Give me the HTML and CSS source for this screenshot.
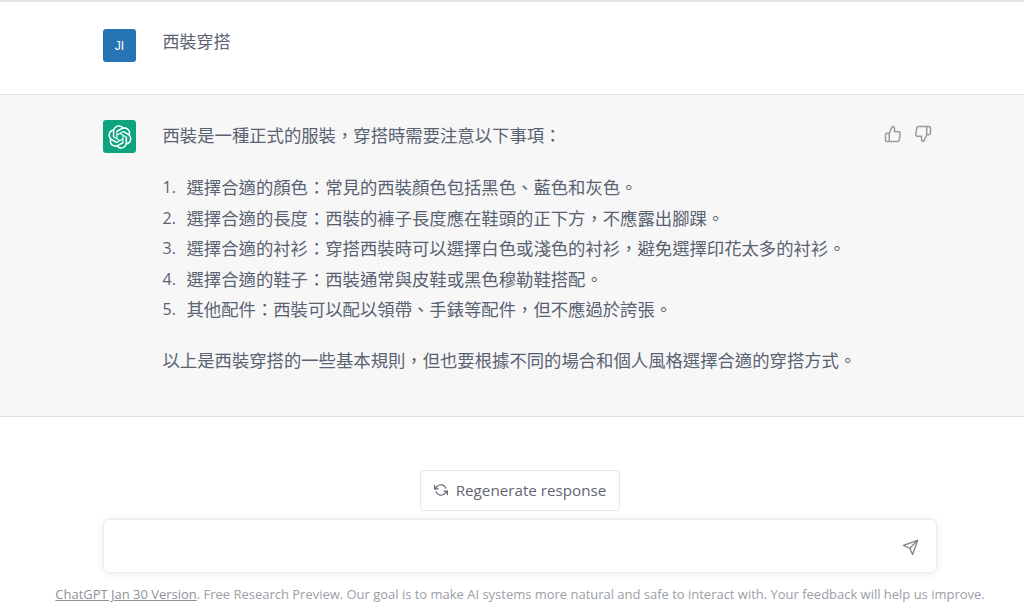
FILE: index.html
```html
<!DOCTYPE html>
<html lang="zh-TW">
<head>
<meta charset="utf-8">
<title>ChatGPT</title>
<link rel="stylesheet" href="styles.css">
</head>
<body>
<main class="page">
  <section class="row row-user">
    <div class="avatar avatar-user">JI</div>
    <p class="prompt">西裝穿搭</p>
  </section>
  <section class="row row-bot">
    <div class="avatar avatar-bot">
      <svg class="logo" viewBox="0 0 41 41" fill="currentColor"><path d="M37.5324 16.8707C37.9808 15.5241 38.1363 14.0974 37.9886 12.6859C37.8409 11.2744 37.3934 9.91076 36.676 8.68622C35.6126 6.83404 33.9882 5.3676 32.0373 4.4985C30.0864 3.62941 27.9098 3.40259 25.8215 3.85078C24.8796 2.7893 23.7219 1.94125 22.4257 1.36341C21.1295 0.785575 19.7249 0.491269 18.3058 0.500197C16.1708 0.495044 14.0893 1.16803 12.3614 2.42214C10.6335 3.67624 9.34853 5.44666 8.6917 7.47815C7.30085 7.76286 5.98686 8.3414 4.8377 9.17505C3.68854 10.0087 2.73073 11.0782 2.02839 12.312C0.956464 14.1591 0.498905 16.2988 0.721698 18.4228C0.944492 20.5467 1.83612 22.5449 3.268 24.1293C2.81966 25.4759 2.66413 26.9026 2.81182 28.3141C2.95951 29.7256 3.40701 31.0892 4.12437 32.3138C5.18791 34.1659 6.8123 35.6322 8.76321 36.5013C10.7141 37.3704 12.8907 37.5973 14.9789 37.1492C15.9208 38.2107 17.0786 39.0587 18.3747 39.6366C19.6709 40.2144 21.0755 40.5087 22.4946 40.4998C24.6307 40.5054 26.7133 39.8321 28.4418 38.5772C30.1704 37.3223 31.4556 35.5506 32.1119 33.5179C33.5027 33.2332 34.8167 32.6547 35.9659 31.821C37.115 30.9874 38.0728 29.9178 38.7752 28.684C39.8458 26.8371 40.3023 24.6979 40.0789 22.5748C39.8556 20.4517 38.9639 18.4544 37.5324 16.8707ZM22.4978 37.8849C20.7443 37.8874 19.0459 37.2733 17.6994 36.1501C17.7601 36.117 17.8666 36.0586 17.936 36.0161L25.9004 31.4156C26.1003 31.3019 26.2663 31.137 26.3813 30.9378C26.4964 30.7386 26.5563 30.5124 26.5549 30.2825V19.0542L29.9213 20.998C29.9389 21.0068 29.9541 21.0198 29.9656 21.0359C29.977 21.052 29.9842 21.0707 29.9867 21.0902V30.3889C29.9842 32.375 29.1946 34.2791 27.7909 35.6841C26.3872 37.0892 24.4838 37.8806 22.4978 37.8849ZM6.39227 31.0064C5.51397 29.4888 5.19742 27.7107 5.49804 25.9832C5.55718 26.0187 5.66048 26.0818 5.73461 26.1244L13.699 30.7248C13.8975 30.8408 14.1233 30.902 14.3532 30.902C14.583 30.902 14.8088 30.8408 15.0073 30.7248L24.731 25.1103V28.9979C24.7321 29.0177 24.7283 29.0376 24.7199 29.0556C24.7115 29.0736 24.6988 29.0893 24.6829 29.1012L16.6317 33.7497C14.9096 34.7416 12.8643 35.0097 10.9447 34.4954C9.02506 33.9811 7.38785 32.7263 6.39227 31.0064ZM4.29707 13.6194C5.17156 12.0998 6.55279 10.9364 8.19885 10.3327C8.19885 10.4013 8.19491 10.5228 8.19491 10.6071V19.808C8.19351 20.0378 8.25334 20.2638 8.36823 20.4629C8.48312 20.6619 8.64893 20.8267 8.84863 20.9404L18.5723 26.5542L15.206 28.4979C15.1894 28.5089 15.1703 28.5155 15.1505 28.5173C15.1307 28.5191 15.1107 28.516 15.0924 28.5082L7.04046 23.8557C5.32135 22.8601 4.06716 21.2235 3.55289 19.3046C3.03862 17.3858 3.30624 15.3413 4.29707 13.6194ZM31.955 20.0556L22.2312 14.4411L25.5976 12.4981C25.6142 12.4872 25.6333 12.4805 25.6531 12.4787C25.6729 12.4769 25.6928 12.4801 25.7111 12.4879L33.7631 17.1364C34.9967 17.849 36.0017 18.8982 36.6606 20.1613C37.3194 21.4244 37.6047 22.849 37.4832 24.2684C37.3617 25.6878 36.8382 27.0432 35.9743 28.1759C35.1103 29.3086 33.9415 30.1717 32.6047 30.6641C32.6047 30.5947 32.6047 30.4733 32.6047 30.3889V21.188C32.6066 20.9586 32.5474 20.7328 32.4332 20.5338C32.319 20.3348 32.154 20.1698 31.955 20.0556ZM35.3055 15.0128C35.2464 14.9765 35.1431 14.9142 35.069 14.8717L27.1045 10.2712C26.906 10.1554 26.6803 10.0943 26.4504 10.0943C26.2206 10.0943 25.9948 10.1554 25.7963 10.2712L16.0726 15.8858V11.9982C16.0715 11.9783 16.0753 11.9585 16.0837 11.9405C16.0921 11.9225 16.1048 11.9068 16.1207 11.8949L24.1719 7.25025C25.4053 6.53903 26.8158 6.19376 28.2383 6.25482C29.6608 6.31589 31.0364 6.78077 32.2044 7.59508C33.3723 8.40939 34.2842 9.53945 34.8334 10.8531C35.3826 12.1667 35.5464 13.6095 35.3055 15.0128ZM14.2424 21.9419L10.8752 19.9981C10.8576 19.9893 10.8423 19.9763 10.8309 19.9602C10.8195 19.9441 10.8122 19.9254 10.8098 19.9058V10.6071C10.8107 9.18295 11.2173 7.78848 11.9819 6.58696C12.7466 5.38544 13.8377 4.42659 15.1275 3.82264C16.4173 3.21869 17.8524 2.99464 19.2649 3.1767C20.6775 3.35876 22.0089 3.93941 23.1034 4.85067C23.0427 4.88379 22.937 4.94215 22.8668 4.98473L14.9024 9.58517C14.7025 9.69878 14.5366 9.86356 14.4215 10.0626C14.3065 10.2616 14.2466 10.4877 14.2479 10.7175L14.2424 21.9419ZM16.071 17.9991L20.4018 15.4978L24.7325 17.9975V22.9985L20.4018 25.4983L16.071 22.9985V17.9991Z"/></svg>
    </div>
    <div class="answer">
      <p class="para">西裝是一種正式的服裝，穿搭時需要注意以下事項：</p>
      <ol class="steps">
        <li>選擇合適的顏色：常見的西裝顏色包括黑色、藍色和灰色。</li>
        <li>選擇合適的長度：西裝的褲子長度應在鞋頭的正下方，不應露出腳踝。</li>
        <li>選擇合適的衬衫：穿搭西裝時可以選擇白色或淺色的衬衫，避免選擇印花太多的衬衫。</li>
        <li>選擇合適的鞋子：西裝通常與皮鞋或黑色穆勒鞋搭配。</li>
        <li>其他配件：西裝可以配以領帶、手錶等配件，但不應過於誇張。</li>
      </ol>
      <p class="para">以上是西裝穿搭的一些基本規則，但也要根據不同的場合和個人風格選擇合適的穿搭方式。</p>
    </div>
    <div class="feedback">
      <svg class="icon thumb" viewBox="0 0 24 24"><path d="M14 9V5a3 3 0 0 0-3-3l-4 9v11h11.28a2 2 0 0 0 2-1.7l1.38-9a2 2 0 0 0-2-2.3zM7 22H4a2 2 0 0 1-2-2v-7a2 2 0 0 1 2-2h3"/></svg>
      <svg class="icon thumb" viewBox="0 0 24 24"><path d="M10 15v4a3 3 0 0 0 3 3l4-9V2H5.72a2 2 0 0 0-2 1.7l-1.38 9a2 2 0 0 0 2 2.3zm7-13h2.67A2.31 2.31 0 0 1 22 4v7a2.31 2.31 0 0 1-2.33 2H17"/></svg>
    </div>
  </section>
  <section class="composer">
    <button class="regen" type="button">
      <svg class="icon regen-icon" viewBox="0 0 24 24"><polyline points="1 4 1 10 7 10"/><polyline points="23 20 23 14 17 14"/><path d="M20.49 9A9 9 0 0 0 5.64 5.64L1 10m22 4l-4.64 4.36A9 9 0 0 1 3.51 15"/></svg>
      Regenerate response
    </button>
    <div class="input">
      <svg class="icon send" viewBox="0 0 24 24"><line x1="22" y1="2" x2="11" y2="13"/><polygon points="22 2 15 22 11 13 2 9 22 2"/></svg>
    </div>
    <p class="foot"><a class="foot-link" href="#">ChatGPT Jan 30 Version</a>. Free Research Preview. Our goal is to make AI systems more natural and safe to interact with. Your feedback will help us improve.</p>
  </section>
</main>
</body>
</html>
```

FILE: styles.css
```css
* { box-sizing: border-box; }
html, body { margin: 0; padding: 0; height: 100%; overflow: hidden; background: #fff; }
body {
  font-family: "Open Sans", "Noto Sans CJK TC", sans-serif;
  color: #4b5563;
}
p, ol { margin: 0; padding: 0; }
.page { display: flex; flex-direction: column; height: 614px; border-top: 2px solid #e3e3e5; }
.row { display: flex; padding-left: 103px; }
.row-user { height: 93px; padding-top: 27px; border-bottom: 1px solid #e5e5e8; }
.row-bot { height: 322px; padding-top: 25px; background: #f7f7f8; border-bottom: 1px solid #dfdfe2; position: relative; }
.avatar { width: 33px; height: 33px; border-radius: 3px; flex: none; display: flex; align-items: center; justify-content: center; color: #fff; }
.avatar-user { background: #2774b4; font: 400 12px "Liberation Sans", sans-serif; }
.avatar-bot { background: #10a37f; }
.logo { width: 24px; height: 24px; }
.prompt { margin-left: 26.5px; font-size: 17px; line-height: 24px; font-family: "Noto Sans CJK TC", sans-serif; font-weight: 400; color: #596270; }
.answer { margin-left: 26.5px; font-family: "Noto Sans CJK TC", sans-serif; font-size: 17.35px; font-weight: 400; line-height: 30.4px; color: #596270; }
.steps { list-style: none; counter-reset: step; margin: 22px 0 21px; }
.steps li { counter-increment: step; display: flex; }
.steps li::before { content: counter(step) "."; width: 24px; flex: none; font-family: "Open Sans", sans-serif; font-weight: 400; font-size: 16px; }
.feedback { position: absolute; left: 884px; top: 30px; display: flex; gap: 12px; }
.icon { fill: none; stroke: currentColor; stroke-width: 2; stroke-linecap: round; stroke-linejoin: round; }
.thumb { width: 18px; height: 18px; color: #9a9aa3; }
.composer { display: flex; flex-direction: column; align-items: center; padding: 53px 0 0 16px; }
.regen { width: 200px; height: 41px; display: flex; align-items: center; justify-content: center; gap: 8px; background: #fff; border: 1px solid #e7e7ea; border-radius: 4px; font: 400 15.2px "Open Sans", sans-serif; color: #5f6672; padding: 0 0 2px; }
.regen-icon { width: 14px; height: 14px; }
.input { width: 834px; height: 54px; margin-top: 8px; background: #fff; border: 1px solid #ebebee; border-radius: 6px; box-shadow: 0 0 10px rgba(0,0,0,.08); display: flex; align-items: center; justify-content: flex-end; padding: 3px 17px 0 0; }
.send { width: 17px; height: 17px; color: #7f7f8a; stroke-width: 1.8; }
.foot { margin-top: 12px; font-size: 12.97px; line-height: 18px; color: #9b9ea6; white-space: nowrap; }
.foot-link { color: #8e9199; text-decoration: underline; }
```
